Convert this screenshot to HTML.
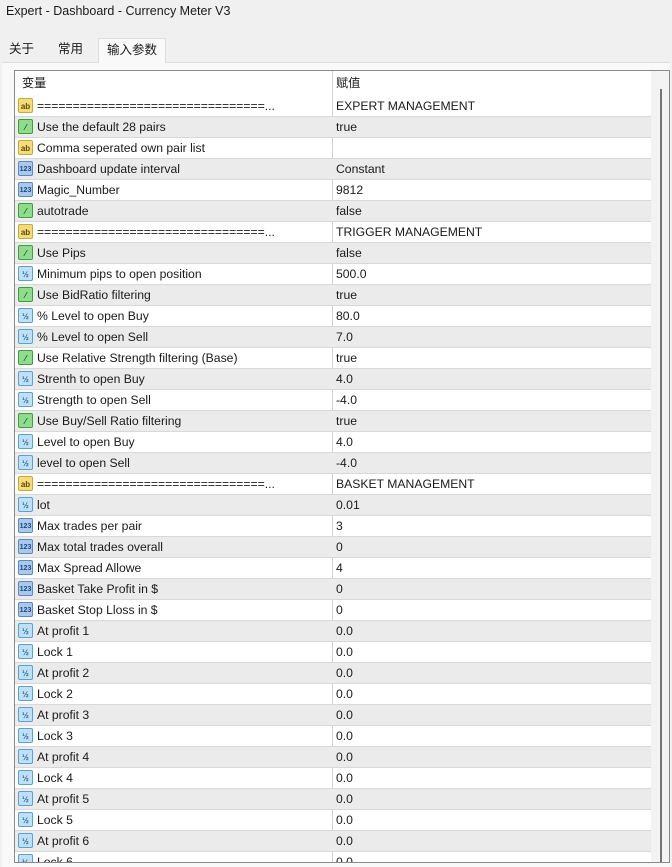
<!DOCTYPE html>
<html><head><meta charset="utf-8"><style>
body{margin:0;width:672px;height:866px;background:#f0f0f0;font-family:"Liberation Sans","Noto Sans CJK SC",sans-serif;font-size:12.2px;color:#1a1a1a;position:relative;overflow:hidden}
.title{position:absolute;left:6px;top:4px;font-size:12.5px}
.tab{position:absolute;top:38px;height:24px;line-height:22px;font-size:12.5px}
.tabsel{background:#f9f9f9;border:1px solid #ddd;border-bottom:none}
.panel{position:absolute;left:2px;top:62px;width:668px;height:804px;background:#f9f9f9;border-top:1px solid #ddd}
.box{position:absolute;left:14px;top:70px;width:654px;height:791px;border:1px solid #8a8a8a;background:#fff;overflow:hidden}
.sb{position:absolute;right:0;top:0;width:18px;height:100%;background:#f3f3f3}
.thumb{position:absolute;left:9px;top:18px;width:2px;height:780px;background:#777}
.hdr{position:absolute;left:0;top:0;width:636px;height:25px;line-height:24px}
.row{position:absolute;left:0;width:636px;height:20px;border-bottom:1px solid #d8d8d8;line-height:20px}
.row.alt{background:#ebebeb}
.n{position:absolute;left:22px;white-space:nowrap}
.v{position:absolute;left:321px}
.div{position:absolute;left:317px;top:0;width:1px;height:100%;background:#d0d0d0}
.ic{position:absolute;left:3px;top:2px;width:15px;height:15px;border-radius:2px;font-size:8px;line-height:15px;text-align:center;font-weight:bold}
.ab{background:#f5dc7a;border:1px solid #c9a93a;width:13px;height:13px;color:#5a4a00}
.gr{background:#8fdc8f;border:1px solid #3aa03a;width:13px;height:13px;color:#0a5a0a}
.i3{background:#a9c8ea;border:1px solid #5a8ac0;width:13px;height:13px;color:#1a4a8a;font-size:7px}
.hf{background:#bfe0f5;border:1px solid #5aa0d0;width:13px;height:13px;color:#1a6aa0}
</style></head><body>
<div class="title">Expert - Dashboard - Currency Meter V3</div>
<div class="panel"></div>
<div class="tab" style="left:9px">关于</div>
<div class="tab" style="left:58px">常用</div>
<div class="tab tabsel" style="left:98px;padding:0 8px">输入参数</div>
<div class="box">
<div class="div"></div>
<div class="hdr"><span class="n" style="left:7px">变量</span><span class="v">赋值</span></div>
<div id="rows"></div>
<div class="sb"><div class="thumb"></div></div>
</div>
<script>
var d=[["ab","================================...","EXPERT MANAGEMENT"],["gr","Use the default 28 pairs","true"],["ab","Comma seperated own pair list",""],["i3","Dashboard update interval","Constant"],["i3","Magic_Number","9812"],["gr","autotrade","false"],["ab","================================...","TRIGGER MANAGEMENT"],["gr","Use Pips","false"],["hf","Minimum pips to open position","500.0"],["gr","Use BidRatio filtering","true"],["hf","% Level to open Buy","80.0"],["hf","% Level to open Sell","7.0"],["gr","Use Relative Strength filtering (Base)","true"],["hf","Strenth to open Buy","4.0"],["hf","Strength to open Sell","-4.0"],["gr","Use Buy/Sell Ratio filtering","true"],["hf","Level to open Buy","4.0"],["hf","level to open Sell","-4.0"],["ab","================================...","BASKET MANAGEMENT"],["hf","lot","0.01"],["i3","Max trades per pair","3"],["i3","Max total trades overall","0"],["i3","Max Spread Allowe","4"],["i3","Basket Take Profit in $","0"],["i3","Basket Stop Lloss in $","0"],["hf","At profit 1","0.0"],["hf","Lock 1","0.0"],["hf","At profit 2","0.0"],["hf","Lock 2","0.0"],["hf","At profit 3","0.0"],["hf","Lock 3","0.0"],["hf","At profit 4","0.0"],["hf","Lock 4","0.0"],["hf","At profit 5","0.0"],["hf","Lock 5","0.0"],["hf","At profit 6","0.0"],["hf","Lock 6","0.0"]];
var lab={ab:"ab",gr:"⁄",i3:"123",hf:"½"};
var h="";d.forEach(function(r,i){h+='<div class="row'+(i%2?' alt':'')+'" style="top:'+(25+i*21)+'px"><div class="ic '+r[0]+'">'+lab[r[0]]+'</div><span class="n">'+r[1]+'</span><span class="v">'+r[2]+'</span></div>';});
document.getElementById("rows").innerHTML=h;
</script>
</body></html>
